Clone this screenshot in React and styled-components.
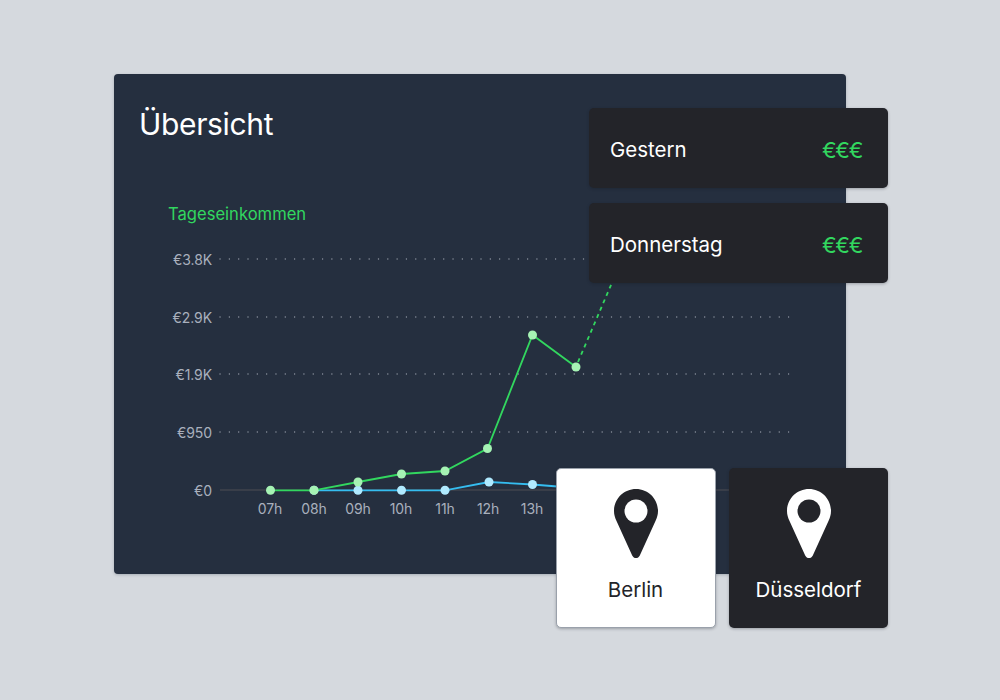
import React from 'react';
import styled, { createGlobalStyle } from 'styled-components';

const GlobalStyle = createGlobalStyle`
  html, body {
    margin: 0;
    padding: 0;
    background: #d5d9de;
    font-family: Inter, "Liberation Sans", sans-serif;
  }
`;

const yTicks = [
  { label: '€3.8K', y: 259 },
  { label: '€2.9K', y: 317 },
  { label: '€1.9K', y: 374 },
  { label: '€950', y: 432 },
];

const xTicks = [
  { label: '07h', x: 270 },
  { label: '08h', x: 314 },
  { label: '09h', x: 358 },
  { label: '10h', x: 401 },
  { label: '11h', x: 445 },
  { label: '12h', x: 488 },
  { label: '13h', x: 532 },
];

const income = [
  [270.5, 490.3],
  [314, 490.3],
  [358, 482],
  [401.5, 474],
  [445, 471],
  [487.5, 448.5],
  [532.5, 335],
  [576, 367],
];

const visitors = [
  [314, 490.3],
  [358, 490.3],
  [401.5, 490.3],
  [445, 490.3],
  [489, 482],
  [532.5, 484.5],
  [576, 488],
];

const toPoints = (list) => list.map((p) => p.join(',')).join(' ');

const Chart = () => (
  <ChartSvg viewBox="114 240 732 334">
    {yTicks.map((tick) => (
      <g key={tick.label}>
        <TickText x="212" y={tick.y + 5.5} textAnchor="end">
          {tick.label}
        </TickText>
        <line
          x1="220"
          x2="794"
          y1={tick.y}
          y2={tick.y}
          stroke="#8d94a0"
          strokeWidth="1.3"
          strokeLinecap="round"
          strokeDasharray="0.1 9.22"
        />
      </g>
    ))}
    <TickText x="212" y="495.500" textAnchor="end">
      €0
    </TickText>
    <line x1="220" x2="794" y1="490" y2="490" stroke="#40444e" strokeWidth="1.3" />
    {xTicks.map((tick) => (
      <TickText key={tick.label} x={tick.x} y="513.500" textAnchor="middle">
        {tick.label}
      </TickText>
    ))}
    <polyline points={toPoints(visitors)} fill="none" stroke="#35bdf0" strokeWidth="1.8" />
    {visitors.map(([x, y]) => (
      <circle key={x} cx={x} cy={y} r="4.500" fill="#b0eaff" />
    ))}
    <polyline points={toPoints(income)} fill="none" stroke="#32d75f" strokeWidth="1.8" />
    <line
      x1="578"
      y1="362"
      x2="620"
      y2="264"
      stroke="#32d75f"
      strokeWidth="1.8"
      strokeDasharray="4 4"
    />
    {income.map(([x, y]) => (
      <circle key={x} cx={x} cy={y} r="4.500" fill="#a6f3b4" />
    ))}
  </ChartSvg>
);

const Pin = ({ color, hole }) => (
  <svg width="44" height="70" viewBox="0 0 44 70" aria-hidden="true">
    <path
      d="M22 0C9.8 0 0 9.8 0 22c0 3.6 1 6.8 2.400 9.800L18.200 66.500c1.600 3.400 6 3.400 7.600 0L41.600 31.800C43 28.800 44 25.600 44 22 44 9.800 34.200 0 22 0z"
      fill={color}
    />
    <circle cx="22" cy="22" r="11.500" fill={hole} />
  </svg>
);

const App = () => (
  <Stage>
    <GlobalStyle />
    <Panel>
      <Title>Übersicht</Title>
      <Legend>Tageseinkommen</Legend>
      <Chart />
      <DayStack>
        <DayCard>
          <DayName>Gestern</DayName>
          <DayValue>€€€</DayValue>
        </DayCard>
        <DayCard>
          <DayName>Donnerstag</DayName>
          <DayValue>€€€</DayValue>
        </DayCard>
      </DayStack>
      <CityRow>
        <CityCard $light>
          <Pin color="#232429" hole="#ffffff" />
          <CityName>Berlin</CityName>
        </CityCard>
        <CityCard>
          <Pin color="#ffffff" hole="#232429" />
          <CityName>Düsseldorf</CityName>
        </CityCard>
      </CityRow>
    </Panel>
  </Stage>
);

const Stage = styled.div`
  width: 1000px;
  height: 700px;
  padding: 74px 0 0 114px;
  box-sizing: border-box;
  overflow: hidden;
  background: #d5d9de;
`;

const Panel = styled.section`
  position: relative;
  display: flex;
  flex-direction: column;
  width: 732px;
  height: 500px;
  border-radius: 4px;
  background: #252f3f;
  box-shadow: 0 1px 3px rgba(37, 47, 63, 0.25);
`;

const Title = styled.h1`
  margin: 30px 0 0 25px;
  font-size: 30px;
  line-height: 40px;
  font-weight: 400;
  letter-spacing: -0.35px;
  color: #ffffff;
`;

const Legend = styled.div`
  margin: 60px 0 0 54px;
  font-size: 16.6px;
  line-height: 20px;
  color: #32d75f;
`;

const ChartSvg = styled.svg`
  display: block;
  width: 732px;
  height: 334px;
  margin-top: auto;
`;

const TickText = styled.text`
  font-size: 14px;
  letter-spacing: -0.1px;
  fill: #a9b0bd;
`;

const DayStack = styled.div`
  position: absolute;
  top: 34px;
  right: -42px;
  display: flex;
  flex-direction: column;
  gap: 15px;
`;

const DayCard = styled.div`
  display: flex;
  align-items: center;
  justify-content: space-between;
  width: 299px;
  height: 80px;
  padding: 3px 26px 0 21px;
  box-sizing: border-box;
  border-radius: 5px;
  background: #232429;
  box-shadow: 0 1px 3px rgba(20, 24, 32, 0.3);
`;

const DayName = styled.span`
  font-size: 20.5px;
  color: #ffffff;
`;

const DayValue = styled.span`
  font-size: 22px;
  letter-spacing: -1.3px;
  color: #32d75f;
`;

const CityRow = styled.div`
  position: absolute;
  top: 394px;
  right: -42px;
  display: flex;
  gap: 13px;
`;

const CityCard = styled.div`
  display: flex;
  flex-direction: column;
  align-items: center;
  width: ${({ $light }) => ($light ? '160px' : '159px')};
  height: 160px;
  padding: ${({ $light }) => ($light ? '20px 1px 0 0' : '21px 0 0')};
  box-sizing: border-box;
  border-radius: 5px;
  border: ${({ $light }) => ($light ? '1px solid #9aa1ab' : 'none')};
  background: ${({ $light }) => ($light ? '#ffffff' : '#232429')};
  color: ${({ $light }) => ($light ? '#232429' : '#ffffff')};
  box-shadow: 0 1px 3px rgba(20, 24, 32, 0.3);
`;

const CityName = styled.div`
  margin-top: 18px;
  font-size: 20.5px;
  line-height: 26px;
`;

export default App;
